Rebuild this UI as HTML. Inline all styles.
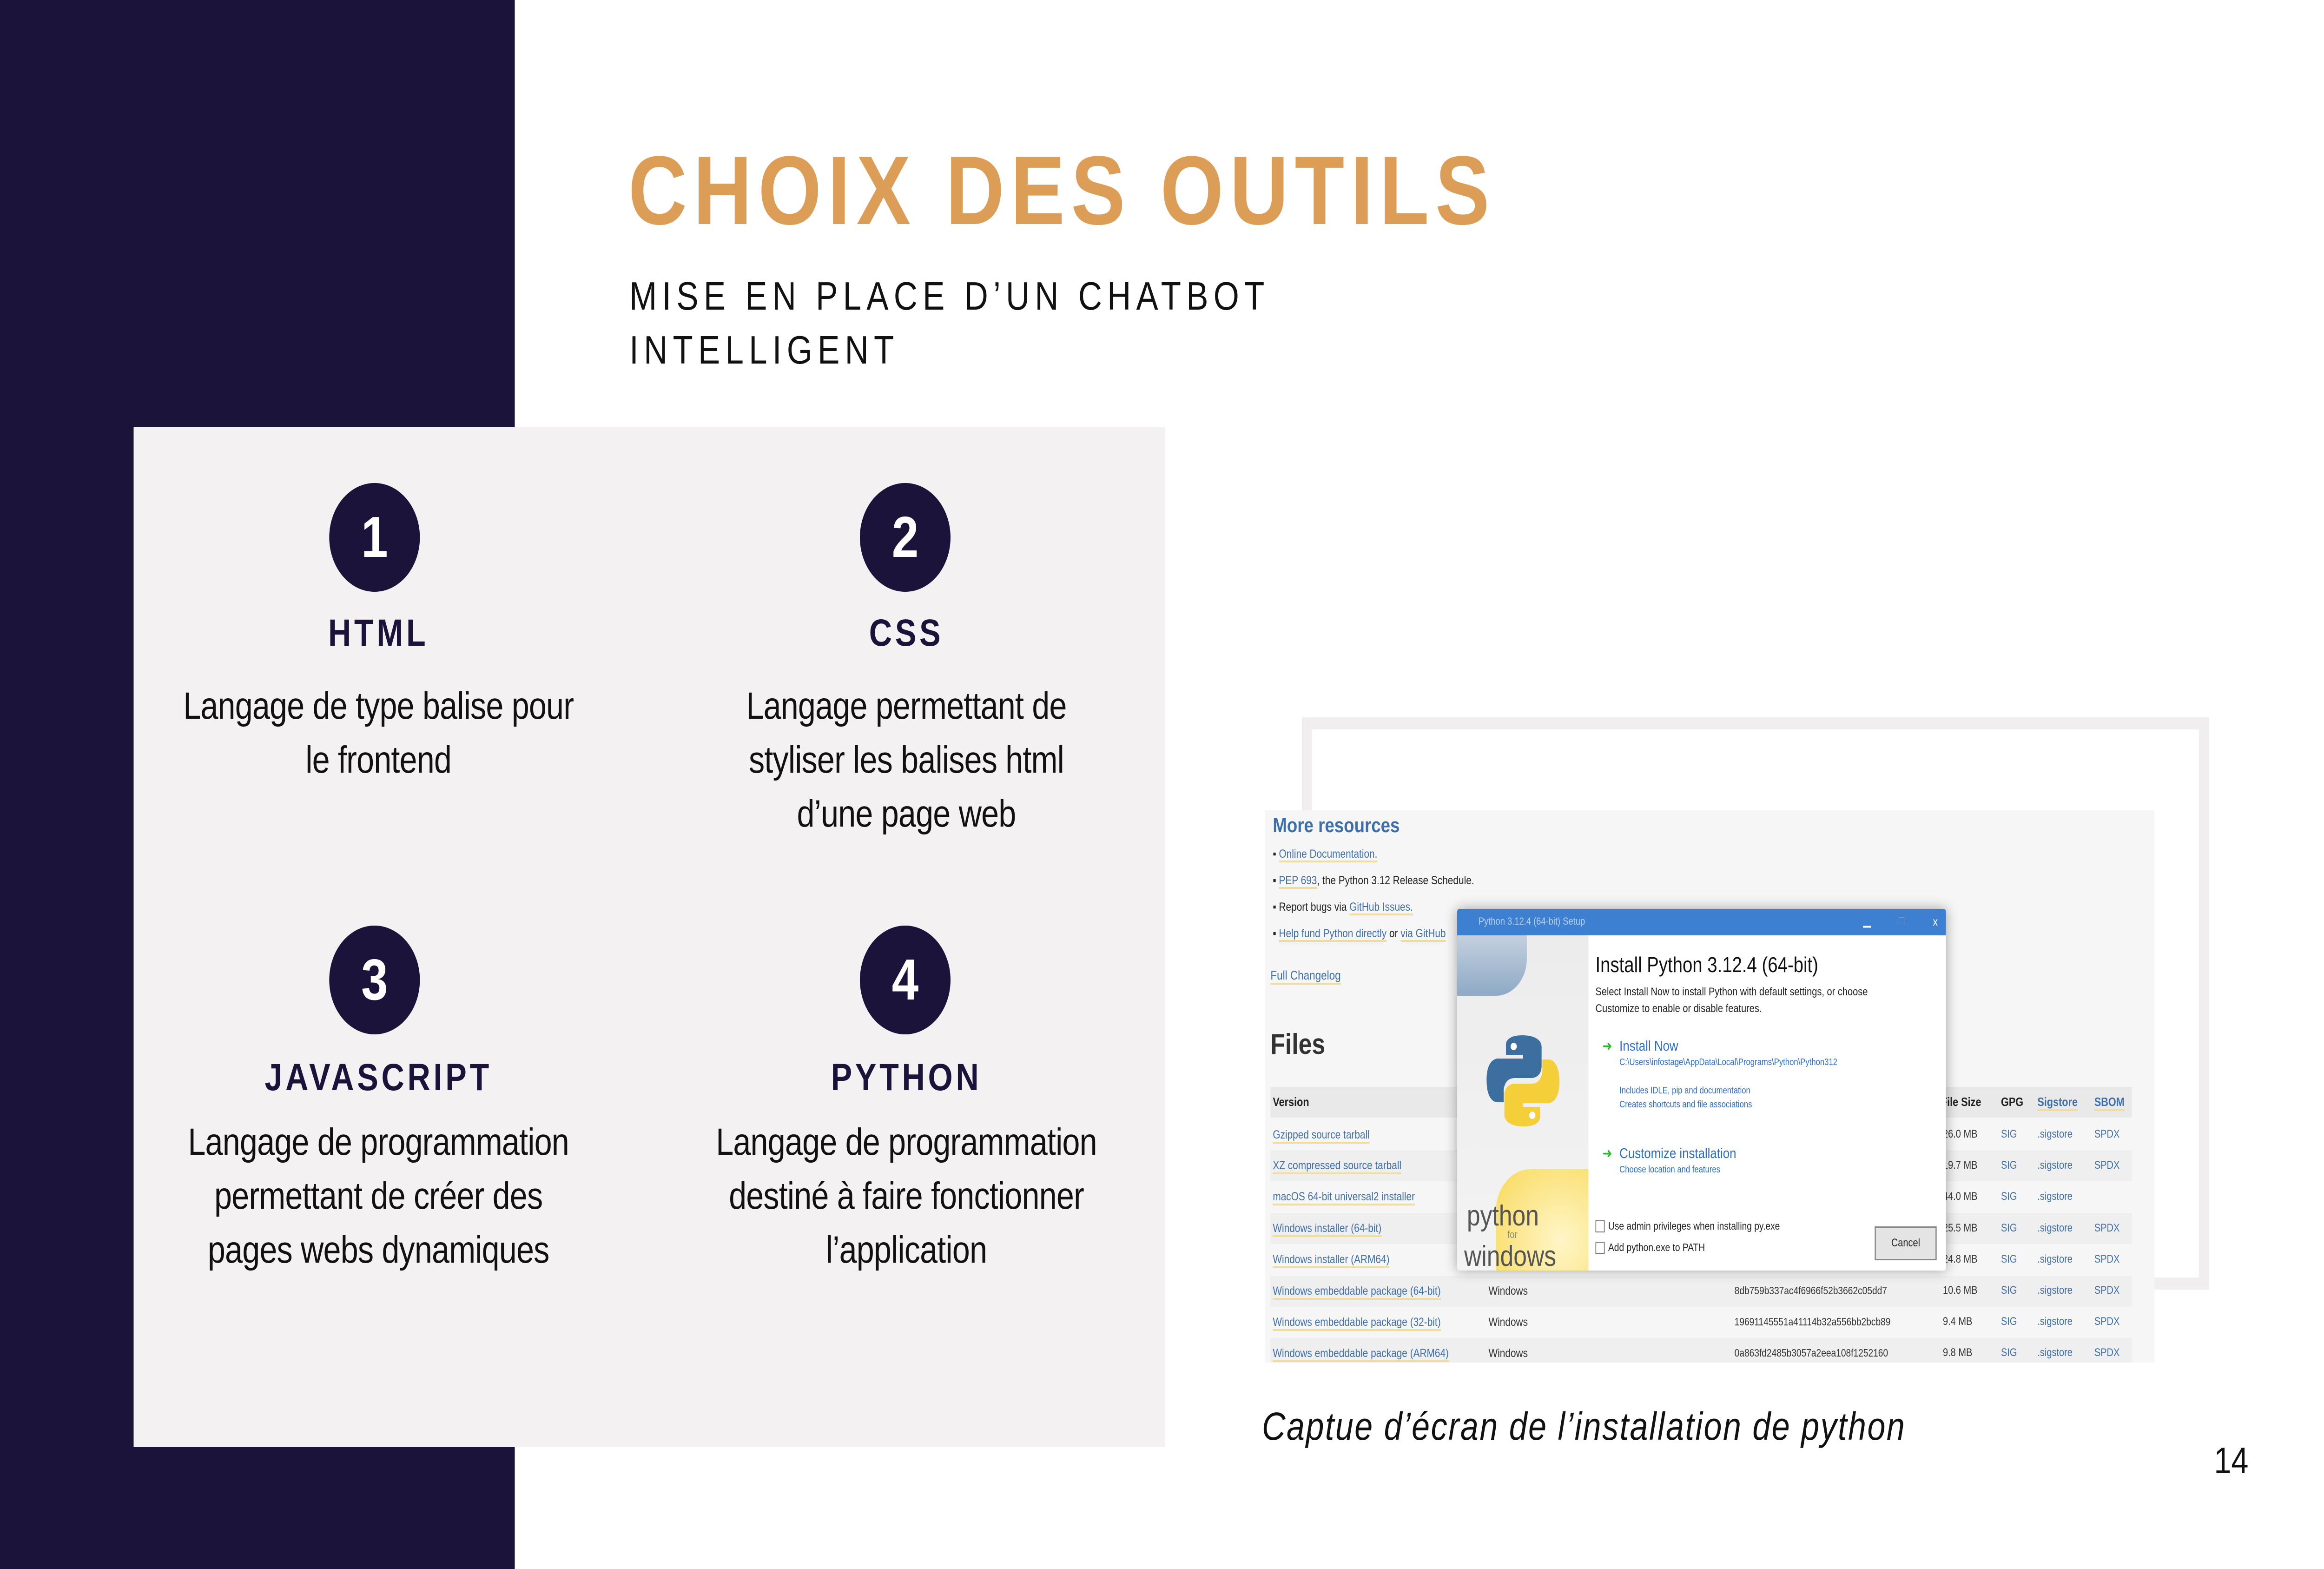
<!DOCTYPE html>
<html><head><meta charset="utf-8"><style>
*{margin:0;padding:0;box-sizing:border-box}
html,body{width:100%;height:100%;overflow:hidden;background:#fff}
body{font-family:"Liberation Sans",sans-serif}
svg.root{display:block;width:100vw;height:100vh}
#wrap{position:relative;width:6000px;height:3375px;overflow:hidden;background:#fff;font-family:"Liberation Sans",sans-serif}
.abs{position:absolute}
.navy{left:0;top:0;width:1329px;height:3375px;background:#1b1339}
.title{left:1622px;top:290px;font-size:210px;font-weight:bold;color:#dc9d56;letter-spacing:16px;white-space:nowrap;line-height:240px}
.sub{left:1625px;top:580px;font-size:85px;color:#111;letter-spacing:13.5px;line-height:116px;white-space:nowrap}
.box{left:345px;top:919px;width:2663px;height:2193px;background:#f3f1f2}
.circ{width:234px;height:234px;border-radius:50%;background:#1b1339;color:#fff;font-weight:bold;font-size:124px;text-align:center;line-height:234px}
.h{font-weight:bold;font-size:82px;color:#1b1339;letter-spacing:8px;text-align:center;width:1300px;line-height:100px}
.d{font-size:82px;color:#111;text-align:center;width:1300px;line-height:116px;letter-spacing:-1px}
.frame{left:3361px;top:1543px;width:2342px;height:1231px;border:26px solid #f0eeef}
.shot{left:3266px;top:1743px;width:2296px;height:1188px;background:#f6f6f6;overflow:hidden}
.shot .t{position:absolute;white-space:nowrap}
.lk{color:#3f6fa8;border-bottom:4px solid #f2dc9a}
.row{position:absolute;left:14px;width:2224px;height:67px}
.dlg{left:496px;top:212px;width:1262px;height:778px;background:#fff;box-shadow:0 0 30px rgba(0,0,0,.35);border-radius:6px;overflow:hidden}
</style></head><body>
<svg class="root" viewBox="0 0 6000 3375" preserveAspectRatio="none" xmlns="http://www.w3.org/2000/svg">
<foreignObject x="0" y="0" width="6000" height="3375">
<div xmlns="http://www.w3.org/1999/xhtml" id="wrap">
<div class="abs navy"></div>
<div class="abs title">CHOIX DES OUTILS</div>
<div class="abs sub">MISE EN PLACE D’UN CHATBOT<br/>INTELLIGENT</div>
<div class="abs box"></div>

<div class="abs circ" style="left:850px;top:1039px">1</div>
<div class="abs h" style="left:327px;top:1312px">HTML</div>
<div class="abs d" style="left:327px;top:1461px">Langage de type balise pour<br/>le frontend</div>

<div class="abs circ" style="left:2220px;top:1039px">2</div>
<div class="abs h" style="left:1690px;top:1312px">CSS</div>
<div class="abs d" style="left:1690px;top:1461px">Langage permettant de<br/>styliser les balises html<br/>d’une page web</div>

<div class="abs circ" style="left:850px;top:1991px">3</div>
<div class="abs h" style="left:327px;top:2268px">JAVASCRIPT</div>
<div class="abs d" style="left:327px;top:2399px">Langage de programmation<br/>permettant de créer des<br/>pages webs dynamiques</div>

<div class="abs circ" style="left:2220px;top:1991px">4</div>
<div class="abs h" style="left:1690px;top:2268px">PYTHON</div>
<div class="abs d" style="left:1690px;top:2399px">Langage de programmation<br/>destiné à faire fonctionner<br/>l’application</div>

<div class="abs frame"></div>
<div class="abs shot">
  <div class="t" style="left:20px;top:8px;font-size:44px;font-weight:bold;color:#3f6fa8">More resources</div>
  <div class="t" style="left:20px;top:80px;font-size:25px;color:#222">▪ <span class="lk">Online Documentation.</span></div>
  <div class="t" style="left:20px;top:137px;font-size:25px;color:#222">▪ <span class="lk">PEP 693</span>, the Python 3.12 Release Schedule.</div>
  <div class="t" style="left:20px;top:194px;font-size:25px;color:#222">▪ Report bugs via <span class="lk">GitHub Issues.</span></div>
  <div class="t" style="left:20px;top:251px;font-size:25px;color:#222">▪ <span class="lk">Help fund Python directly</span> or <span class="lk">via GitHub</span></div>
  <div class="t lk" style="left:14px;top:340px;font-size:27px">Full Changelog</div>
  <div class="t" style="left:14px;top:468px;font-size:62px;font-weight:bold;color:#333">Files</div>
  <div class="row" style="top:595px;background:#e9e9e9;height:66px"></div>
  <div class="row" style="top:731px;background:#efefef"></div>
  <div class="row" style="top:866px;background:#efefef"></div>
  <div class="row" style="top:1001px;background:#efefef"></div>
  <div class="row" style="top:1135px;background:#efefef"></div>
  <div class="t" style="left:20px;top:612px;font-size:26px;font-weight:bold;color:#222">Version</div>
  <div class="t" style="left:1745px;top:612px;font-size:26px;font-weight:bold;color:#222">File Size</div>
  <div class="t" style="left:1900px;top:612px;font-size:26px;font-weight:bold;color:#222">GPG</div>
  <div class="t lk" style="left:1994px;top:612px;font-size:26px;font-weight:bold">Sigstore</div>
  <div class="t lk" style="left:2141px;top:612px;font-size:26px;font-weight:bold">SBOM</div>
  <div class="t lk" style="left:20px;top:684px;font-size:25px">Gzipped source tarball</div>
  <div class="t lk" style="left:20px;top:750px;font-size:25px">XZ compressed source tarball</div>
  <div class="t lk" style="left:20px;top:817px;font-size:25px">macOS 64-bit universal2 installer</div>
  <div class="t lk" style="left:20px;top:885px;font-size:25px">Windows installer (64-bit)</div>
  <div class="t lk" style="left:20px;top:952px;font-size:25px">Windows installer (ARM64)</div>
  <div class="t lk" style="left:20px;top:1020px;font-size:25px">Windows embeddable package (64-bit)</div>
  <div class="t lk" style="left:20px;top:1087px;font-size:25px">Windows embeddable package (32-bit)</div>
  <div class="t lk" style="left:20px;top:1154px;font-size:25px">Windows embeddable package (ARM64)</div>
  <div class="t" style="left:577px;top:1020px;font-size:25px;color:#333">Windows</div>
  <div class="t" style="left:577px;top:1087px;font-size:25px;color:#333">Windows</div>
  <div class="t" style="left:577px;top:1154px;font-size:25px;color:#333">Windows</div>
  <div class="t" style="left:1212px;top:1020px;font-size:23px;color:#333">8db759b337ac4f6966f52b3662c05dd7</div>
  <div class="t" style="left:1212px;top:1087px;font-size:23px;color:#333">19691145551a41114b32a556bb2bcb89</div>
  <div class="t" style="left:1212px;top:1154px;font-size:23px;color:#333">0a863fd2485b3057a2eea108f1252160</div>
  <div class="t" style="left:1750px;top:663px;font-size:24px;color:#333;line-height:67.2px">26.0 MB<br/>19.7 MB<br/>44.0 MB<br/>25.5 MB<br/>24.8 MB<br/>10.6 MB<br/>9.4 MB<br/>9.8 MB</div>
  <div class="t" style="left:1900px;top:663px;font-size:24px;color:#3f6fa8;line-height:67.2px">SIG<br/>SIG<br/>SIG<br/>SIG<br/>SIG<br/>SIG<br/>SIG<br/>SIG</div>
  <div class="t" style="left:1994px;top:663px;font-size:24px;color:#3f6fa8;line-height:67.2px">.sigstore<br/>.sigstore<br/>.sigstore<br/>.sigstore<br/>.sigstore<br/>.sigstore<br/>.sigstore<br/>.sigstore</div>
  <div class="t" style="left:2141px;top:663px;font-size:24px;color:#3f6fa8;line-height:67.2px">SPDX<br/>SPDX<br/> <br/>SPDX<br/>SPDX<br/>SPDX<br/>SPDX<br/>SPDX</div>

  <div class="abs dlg">
    <div class="abs" style="left:0;top:0;width:1262px;height:57px;background:#3d7fd0"></div>
    <div class="t" style="left:55px;top:14px;font-size:22px;color:#b9cff0">Python 3.12.4 (64-bit) Setup</div>
    <div class="t" style="left:1048px;top:10px;font-size:26px;color:#fff">▁</div>
    <div class="t" style="left:1140px;top:12px;font-size:24px;color:#a9c4ee">□</div>
    <div class="t" style="left:1228px;top:12px;font-size:26px;color:#fff">x</div>
    <div class="abs" style="left:0;top:57px;width:339px;height:721px;background:linear-gradient(#ececec,#f3f3f3)"></div>
    <div class="abs" style="left:0;top:57px;width:180px;height:130px;background:linear-gradient(#c3d0de,#8ea9c6);border-radius:0 0 80px 0"></div>
    <div class="abs" style="left:100px;top:560px;width:239px;height:218px;background:radial-gradient(circle at 70% 70%,#fff6c8,#f8d95a);border-radius:90px 0 0 0"></div>
    <svg class="abs" style="left:60px;top:260px" width="220" height="220" viewBox="0 0 110 110">
      <path d="M54 6c-22 0-21 10-21 10v11h22v4H24S8 29 8 54s14 24 14 24h8V66s0-14 14-14h22s13 0 13-13V19S81 6 54 6z" fill="#3c6e9f"/>
      <path d="M56 104c22 0 21-10 21-10V83H55v-4h31s16 2 16-23-14-24-14-24h-8v12s0 14-14 14H44s-13 0-13 13v20s-2 13 25 13z" fill="#f5cf3a"/>
      <circle cx="43" cy="18" r="4" fill="#fff"/><circle cx="67" cy="92" r="4" fill="#fff"/>
    </svg>
    <div class="t" style="left:25px;top:625px;font-size:62px;color:#555">python</div>
    <div class="t" style="left:130px;top:688px;font-size:22px;color:#888">for</div>
    <div class="t" style="left:18px;top:712px;font-size:62px;color:#555">windows</div>
    <div class="t" style="left:357px;top:93px;font-size:46px;color:#111">Install Python 3.12.4 (64-bit)</div>
    <div class="t" style="left:357px;top:161px;font-size:24px;color:#222;line-height:36px">Select Install Now to install Python with default settings, or choose<br/>Customize to enable or disable features.</div>
    <div class="t" style="left:375px;top:278px;font-size:30px;color:#2ab52a">➜</div>
    <div class="t" style="left:419px;top:277px;font-size:31px;color:#2a6fd0">Install Now</div>
    <div class="t" style="left:419px;top:319px;font-size:20px;color:#2a6fd0">C:\Users\infostage\AppData\Local\Programs\Python\Python312</div>
    <div class="t" style="left:419px;top:376px;font-size:20px;color:#2a6fd0;line-height:30px">Includes IDLE, pip and documentation<br/>Creates shortcuts and file associations</div>
    <div class="t" style="left:375px;top:509px;font-size:30px;color:#2ab52a">➜</div>
    <div class="t" style="left:419px;top:508px;font-size:31px;color:#2a6fd0">Customize installation</div>
    <div class="t" style="left:419px;top:550px;font-size:20px;color:#2a6fd0">Choose location and features</div>
    <div class="abs" style="left:357px;top:670px;width:24px;height:26px;border:2px solid #777"></div>
    <div class="t" style="left:390px;top:669px;font-size:23px;color:#222">Use admin privileges when installing py.exe</div>
    <div class="abs" style="left:357px;top:716px;width:24px;height:26px;border:2px solid #777"></div>
    <div class="t" style="left:390px;top:715px;font-size:23px;color:#222">Add python.exe to PATH</div>
    <div class="abs" style="left:1078px;top:683px;width:160px;height:73px;border:3px solid #888;background:#e4e4e4;text-align:center;line-height:66px;font-size:24px;color:#222">Cancel</div>
  </div>
</div>

<div class="abs" style="left:3258px;top:3020px;font-size:84px;font-style:italic;color:#111;letter-spacing:3px;white-space:nowrap">Captue d’écran de l’installation de python</div>
<div class="abs" style="left:5716px;top:3096px;font-size:80px;color:#111">14</div>
</div>
</foreignObject>
</svg>
</body></html>
